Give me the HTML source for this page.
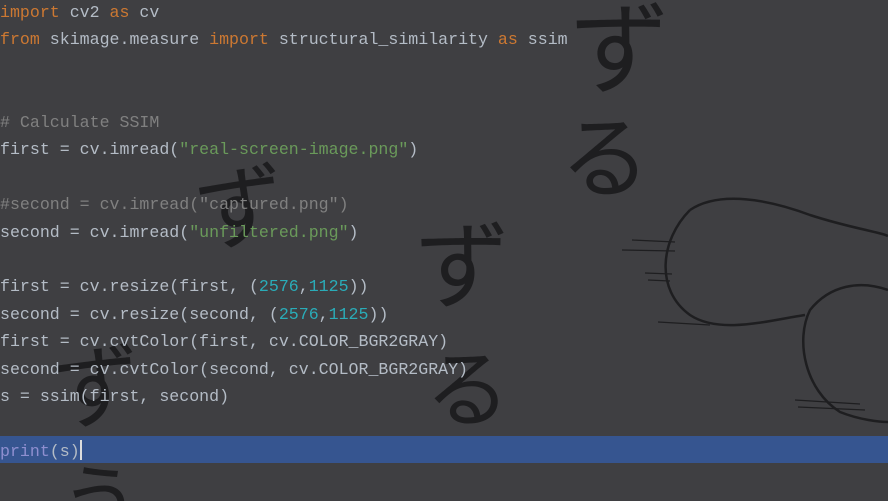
<!DOCTYPE html>
<html><head><meta charset="utf-8"><style>
html,body{margin:0;padding:0;width:888px;height:501px;overflow:hidden;background:#3f3f42;}
svg{position:absolute;left:0;top:0}
.hl{position:absolute;left:0;top:436px;width:888px;height:27px;background:#365590;}
pre{position:absolute;left:0;top:-1px;margin:0;font-family:"Liberation Mono",monospace;font-size:16.6px;line-height:27.44px;color:#b4bcc6;}
.k{color:#cc7832}.c{color:#808080}.s{color:#6a9a5a}.n{color:#2aacb8}.p{color:#8f8fd0}
.cur{display:inline-block;width:2px;height:20px;background:#ddd;vertical-align:-4px}
</style></head><body>
<div class="hl"></div>
<svg width="888" height="501" viewBox="0 0 888 501">
<g font-family="Noto Sans CJK JP, sans-serif" fill="#1e1e20">
<text x="570" y="85" font-size="100">ず</text>
<text x="560" y="190" font-size="90">る</text>
<text x="195" y="240" font-size="90" transform="rotate(-8 240 200)">ず</text>
<text x="415" y="300" font-size="95">ず</text>
<text x="425" y="420" font-size="85">る</text>
<text x="50" y="420" font-size="90" transform="rotate(-6 90 370)">ず</text>
<text x="60" y="530" font-size="80">う</text>
</g>
<g fill="none" stroke="#1e1e20" stroke-width="2.5">
<path d="M690 210 C 720 190,770 200,810 215 C 850 228,880 232,888 236"/>
<path d="M690 210 C 660 240,655 290,690 315 C 720 335,770 320,805 315"/>
<path d="M888 290 C 860 280,830 285,810 310 C 795 340,805 390,840 412 C 860 420,880 422,888 422"/>
</g>
<g stroke="#1e1e20" stroke-width="1.2">
<line x1="632" y1="240" x2="675" y2="242"/><line x1="622" y1="250" x2="675" y2="251"/>
<line x1="645" y1="273" x2="672" y2="274"/><line x1="648" y1="280" x2="670" y2="281"/>
<line x1="658" y1="322" x2="710" y2="325"/><line x1="795" y1="400" x2="860" y2="404"/><line x1="798" y1="407" x2="865" y2="410"/>
</g>
</svg>
<pre><span class="k">import</span> cv2 <span class="k">as</span> cv
<span class="k">from</span> skimage.measure <span class="k">import</span> structural_similarity <span class="k">as</span> ssim


<span class="c"># Calculate SSIM</span>
first = cv.imread(<span class="s">"real-screen-image.png"</span>)

<span class="c">#second = cv.imread("captured.png")</span>
second = cv.imread(<span class="s">"unfiltered.png"</span>)

first = cv.resize(first, (<span class="n">2576</span>,<span class="n">1125</span>))
second = cv.resize(second, (<span class="n">2576</span>,<span class="n">1125</span>))
first = cv.cvtColor(first, cv.COLOR_BGR2GRAY)
second = cv.cvtColor(second, cv.COLOR_BGR2GRAY)
s = ssim(first, second)

<span class="p">print</span>(s)<span class="cur"></span></pre>
</body></html>
